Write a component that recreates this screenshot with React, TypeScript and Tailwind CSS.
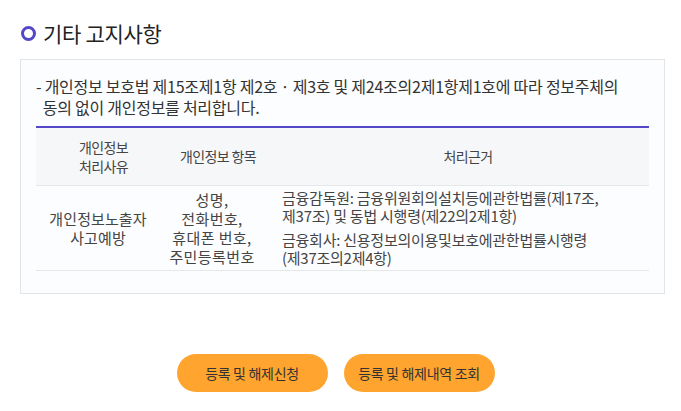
import React from "react";

const font = { fontFamily: '"Noto Sans CJK KR", "Noto Sans", sans-serif' };

export default function App() {
  return (
    <div className="w-[681px] h-[411px] bg-white text-[#333]" style={font}>
      <div className="pt-[20px] px-[20px]">
        <div className="flex items-center h-[26px]">
          <span className="ml-[1px] w-[15px] h-[15px] rounded-full border-[3px] border-[#5548c8]" />
          <span className="ml-[7px] text-[21px] leading-[26px] tracking-[-0.3px] text-[#222]">기타 고지사항</span>
        </div>
        <div className="mt-[13px] w-[645px] border border-[#e3e4e6] bg-[#fcfdfe] pt-[16px] pb-[22px] px-[15px]">
          <p className="text-[16px] leading-[21px] tracking-[-0.25px] text-[#333] whitespace-nowrap">
            - 개인정보 보호법 제15조제1항 제2호 · 제3호 및 제24조의2제1항제1호에 따라 정보주체의
            <br />
            &nbsp;&nbsp;동의 없이 개인정보를 처리합니다.
          </p>
          <div className="mt-[8px] border-t-2 border-[#5548c8] text-[14px] leading-[19px] tracking-[-0.6px] text-[#444]">
            <div className="flex h-[58px] bg-[#f6f7f9] border-b border-[#e6e7e9]">
              <div className="w-[127px] flex items-center justify-center text-center pl-[8px]">개인정보<br />처리사유</div>
              <div className="w-[110px] flex items-center justify-center">개인정보 항목</div>
              <div className="flex-1 flex items-center justify-center pl-[14px]">처리근거</div>
            </div>
            <div className="flex h-[85px] border-b border-[#e6e7e9]">
              <div className="w-[124px] flex items-center justify-center text-center text-[15px] tracking-[0.1px]">개인정보노출자<br />사고예방</div>
              <div className="w-[104px] flex items-center justify-center text-center text-[15px] leading-[19px] tracking-[0.4px]">성명,<br />전화번호,<br />휴대폰 번호,<br />주민등록번호</div>
              <div className="flex-1 flex flex-col justify-center pl-[18px] text-[15px] leading-[18px] tracking-[-0.25px] gap-[6px]">
                <div>금융감독원: 금융위원회의설치등에관한법률(제17조,<br />제37조) 및 동법 시행령(제22의2제1항)</div>
                <div>금융회사: 신용정보의이용및보호에관한법률시행령<br />(제37조의2제4항)</div>
              </div>
            </div>
          </div>
        </div>
      </div>
      <div className="mt-[60px] flex justify-center gap-[16px] pr-[10px]">
        <button className="w-[151px] h-[38px] rounded-full bg-[#ffa42e] text-[14px] tracking-[-0.3px] text-[#333]">등록 및 해제신청</button>
        <button className="w-[151px] h-[38px] rounded-full bg-[#ffa42e] text-[14px] tracking-[-0.3px] text-[#333]">등록 및 해제내역 조회</button>
      </div>
    </div>
  );
}
